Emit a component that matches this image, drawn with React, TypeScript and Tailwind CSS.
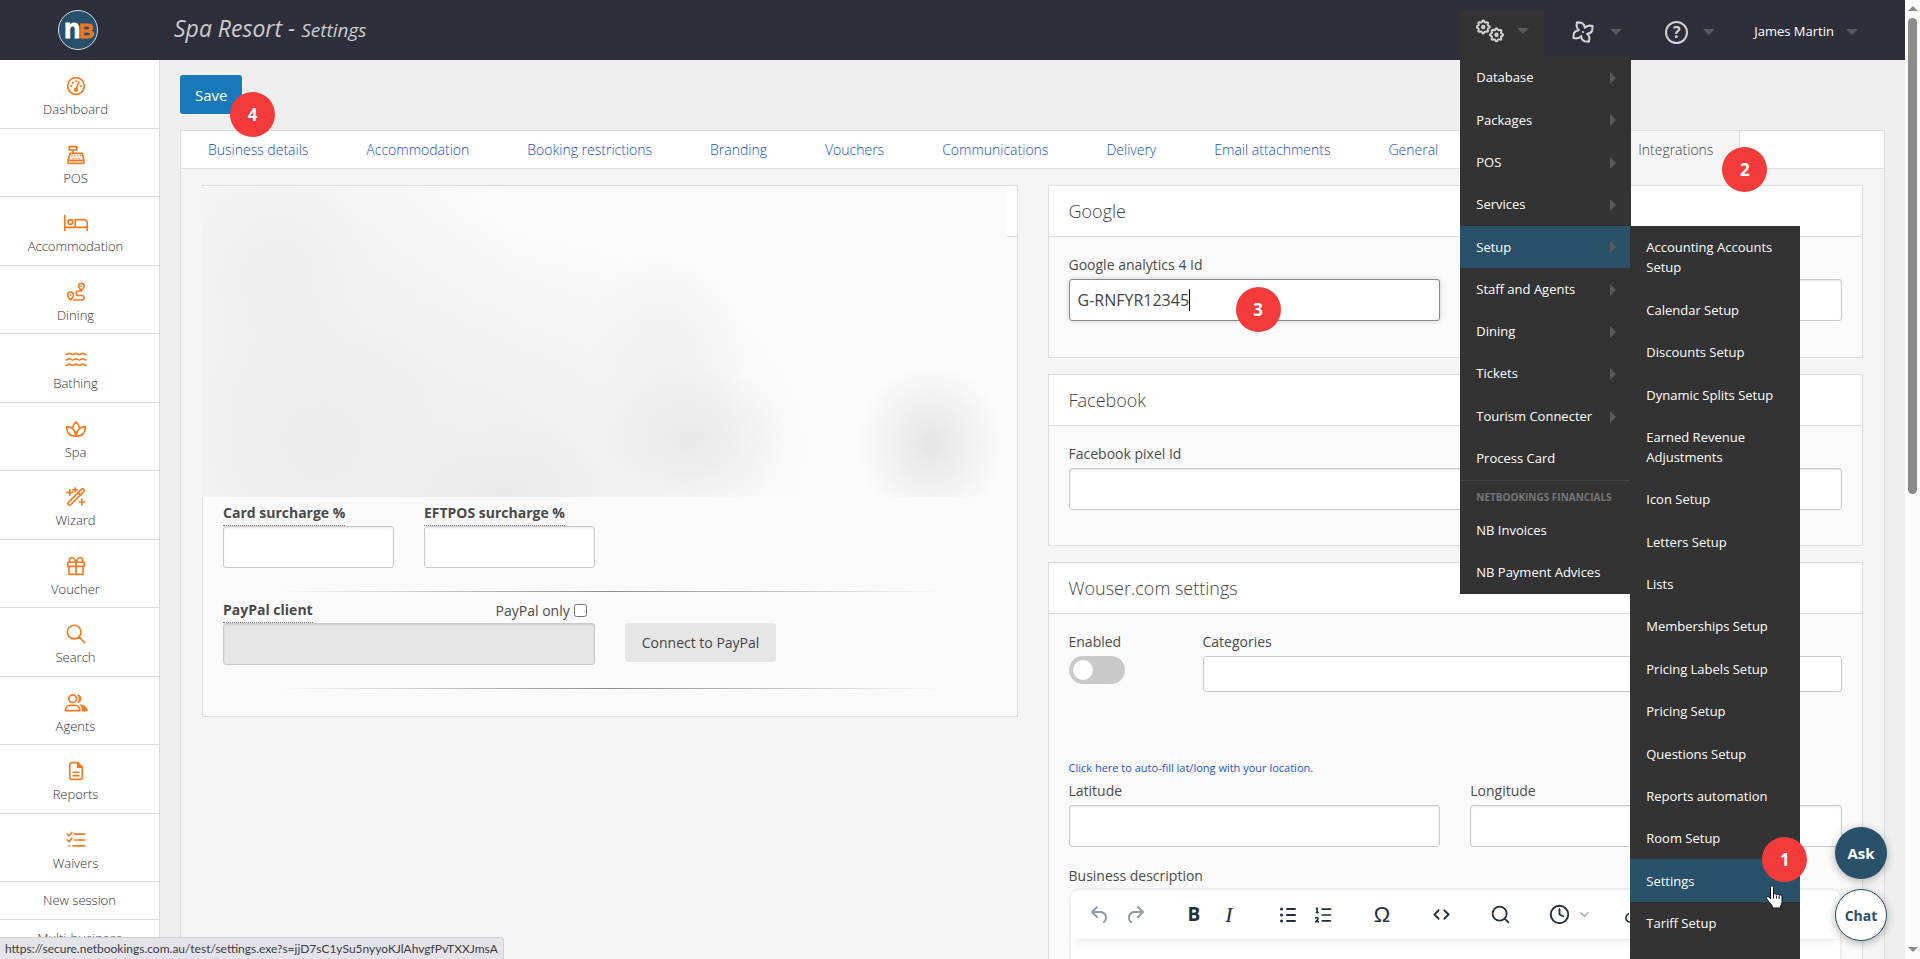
import React from 'react';
import { ChevronDown, Clock, Code, Link2, ListOrdered, Search } from 'lucide-react';
import { clsx } from 'clsx';

const gearPath = (cx: number, cy: number) => {
  const points: string[] = [];
  for (let i = 0; i <= 72; i++) {
    const a = (i / 72) * Math.PI * 2;
    const r = 5.7 + 0.8 * Math.cos(a * 8);
    points.push(`${(cx + r * Math.cos(a)).toFixed(2)},${(cy + r * Math.sin(a)).toFixed(2)}`);
  }
  return `M${points.join('L')}Z`;
};

const GearsIcon = () => (
  <svg width="28" height="24" viewBox="0 0 28 24" fill="none" stroke="#d2d2d2" strokeWidth="2">
    <path d={gearPath(7.2, 8)} />
    <path d={gearPath(20.5, 15.8)} />
    <circle cx="7.2" cy="8" r="1.2" />
    <circle cx="20.5" cy="15.8" r="1.2" />
  </svg>
);

const PinwheelIcon = () => (
  <svg width="22" height="22" viewBox="-12 -12 24 24" fill="none" stroke="#d2d2d2" strokeWidth="2.2" strokeLinejoin="round">
    <path d="M-6.500-10.500L-1.500-10Q2-8 2-4.500Q5-8 10.500-6.500L10-1.500Q8 2 4.500 2Q8 5 6.500 10.500L1.500 10Q-2 8-2 4.500Q-5 8-10.500 6.500L-10 1.500Q-8-2-4.500-2Q-8-5-6.500-10.500Z" />
    <circle r="1.2" fill="#d2d2d2" stroke="none" />
  </svg>
);

const Logo = () => (
  <svg width="42" height="42" viewBox="0 0 42 42" role="img" aria-label="NB" fontFamily="Liberation Sans, sans-serif" fontWeight="700">
    <circle cx="21" cy="21" r="19.5" fill="#27506a" stroke="#d7dde2" strokeWidth="1" />
    <text x="7" y="29" fontSize="27" fill="#fff" stroke="#fff" strokeWidth="0.8">n</text>
    <text x="22" y="29" fontSize="21" fill="#ef7622" stroke="#ef7622" strokeWidth="0.8">B</text>
  </svg>
);

const icons: Record<string, React.ReactNode> = {
  Dashboard: (
    <>
      <circle cx="12" cy="12" r="10" />
      <circle cx="12" cy="16.5" r="1.6" fill="currentColor" />
      <path d="M12.6 15 15.4 7" />
      <path d="M6.4 12h.1M8.2 8h.1M12 6.3h.1M17.6 12h.1" strokeWidth="2.6" />
    </>
  ),
  POS: (
    <>
      <path d="M4 2h9v4H4zM8.500 6v4M5 10h14.500l2 8v4h-19v-4zM2.500 18.500h19" />
      <path d="M7 13h.1M10.500 13h.1M14 13h.1M17.500 13h.1M8.500 16h.1M12 16h.1M15.500 16h.1" strokeWidth="1.8" />
      <path d="M3.500 19.500h17v1.500h-17z" fill="#f9c49c" stroke="none" />
    </>
  ),
  Accommodation: (
    <>
      <path d="M-1.500 3v18M-1.500 17.200h27M25.500 21v-9a4 4 0 0 0-4-4H11v9" />
      <circle cx="5.200" cy="10.800" r="2.800" />
    </>
  ),
  Dining: (
    <>
      <path d="M18.500 10.500s3.300-3.400 3.300-5.600a3.300 3.300 0 0 0-6.600 0c0 2.200 3.300 5.600 3.300 5.600ZM5.500 21.500s3.500-3.600 3.500-6a3.500 3.500 0 0 0-7 0c0 2.400 3.500 6 3.500 6Z" />
      <path d="M18.500 10.800H15a2.700 2.700 0 0 0 0 5.400h4a2.700 2.700 0 0 1 0 5.400H9" />
      <path d="M18.500 5h.1M5.500 15.500h.1" strokeWidth="2" />
    </>
  ),
  Bathing: (
    <path d="M0 5.500c1.500 0 2.500-1.500 4-1.500s2.500 1.500 4 1.500S10.500 4 12 4s2.500 1.500 4 1.500S18.500 4 20 4s2.500 1.500 4 1.500M0 12c1.500 0 2.500-1.500 4-1.500S6.500 12 8 12s2.500-1.500 4-1.500 2.500 1.500 4 1.500 2.500-1.500 4-1.500 2.500 1.500 4 1.500M0 18.500C1.500 18.500 2.500 17 4 17s2.500 1.500 4 1.500 2.500-1.500 4-1.500 2.500 1.500 4 1.500 2.500-1.500 4-1.500 2.500 1.500 4 1.500" />
  ),
  Spa: (
    <path d="M12 20.500C5 20.500.7 16.500.7 9.500 7 9.300 11 12.500 12 20.500Zm0 0c7 0 11.300-4 11.300-11C17 9.300 13 12.500 12 20.500ZM8 10.500C8.700 7.500 10 5 12 3.500c2 1.500 3.300 4 4 7" />
  ),
  Wizard: (
    <>
      <path d="m2.800 18.500 15.700-15.700a1.700 1.700 0 0 1 2.500 0l.3.300a1.700 1.700 0 0 1 0 2.500L5.600 21.300a1.700 1.700 0 0 1-2.500 0l-.3-.3a1.700 1.700 0 0 1 0-2.500ZM14.500 7l3 3" />
      <path d="M4.500 3v7M1 6.500h7M11 1v5M8.500 3.500h5M19 14.500v7M15.500 18h7" />
    </>
  ),
  Voucher: (
    <path d="M2 7.500h20v5H2zM3.500 12.500h17v9.500h-17zM12 7.500V22M12 7.500C10.500 4 9 1.800 7 1.800a2.800 2.800 0 0 0 0 5.700M12 7.500c1.500-3.500 3-5.700 5-5.700a2.800 2.800 0 0 1 0 5.700" />
  ),
  Search: <path d="m15.500 15.500 7 7M18 9.700a8.200 8.200 0 1 1-16.400 0 8.200 8.200 0 0 1 16.400 0Z" />,
  Agents: (
    <>
      <circle cx="8" cy="6.800" r="4.600" />
      <path d="M-.8 21.200c0-4 2.800-6.400 6-6.400h5.600c3.200 0 6 2.400 6 6.400Z" />
      <path d="M14.500 2.200a5 5 0 0 1 0 9.600c1.600-3.200 1.600-6.400 0-9.600ZM17.500 14.500c4.500 0 8 2.700 8 7.200h-6c0-3-.8-5.200-2-7.200Z" fill="currentColor" strokeWidth="1" />
    </>
  ),
  Reports: (
    <>
      <path d="M14 2H7a2.500 2.500 0 0 0-2.500 2.500v15A2.500 2.500 0 0 0 7 22h10a2.500 2.500 0 0 0 2.500-2.500v-12ZM8.500 13.500h7M8.500 17.500h7" />
      <path d="M14 2v5.500h5.500Z" fill="currentColor" />
    </>
  ),
  Waivers: (
    <path d="M10 5h12.500M10 12h12.500M8.500 19h14M1.500 5l2 2L7 3M1.500 12l2 2L7 10M3.800 19h.4" />
  ),
};

const SidebarIcon = ({ name }: { name: string }) => (
  <svg
    className="h-5 w-5 overflow-visible text-[#f47b20]"
    viewBox="0 0 24 24"
    fill="none"
    stroke="currentColor"
    strokeWidth="2"
    strokeLinecap="round"
    strokeLinejoin="round"
  >
    {icons[name]}
  </svg>
);

const tabs = [
  'Business details',
  'Accommodation',
  'Booking restrictions',
  'Branding',
  'Vouchers',
  'Communications',
  'Delivery',
  'Email attachments',
  'General',
];

const menuItems = [
  'Database',
  'Packages',
  'POS',
  'Services',
  'Setup',
  'Staff and Agents',
  'Dining',
  'Tickets',
  'Tourism Connecter',
  'Process Card',
];

const setupItems = [
  'Accounting Accounts Setup',
  'Calendar Setup',
  'Discounts Setup',
  'Dynamic Splits Setup',
  'Earned Revenue Adjustments',
  'Icon Setup',
  'Letters Setup',
  'Lists',
  'Memberships Setup',
  'Pricing Labels Setup',
  'Pricing Setup',
  'Questions Setup',
  'Reports automation',
  'Room Setup',
  'Settings',
  'Tariff Setup',
];

const inputClass =
  'block h-[42px] w-full rounded-[3px] border border-[#cacaca] bg-white px-2 text-base text-[#444] shadow-[inset_0_1px_2px_rgba(10,10,10,0.1)] outline-none';

const Step = ({ n, className }: { n: number; className: string }) => (
  <span
    className={clsx(
      'absolute z-30 flex h-[45px] w-[45px] items-center justify-center rounded-full bg-[#f43b3b] text-[17px] font-bold text-white',
      className,
    )}
  >
    {n}
  </span>
);

const Caret = () => (
  <span className="h-0 w-0 border-x-6 border-t-6 border-x-transparent border-t-[#5b5b5b]" />
);

const Pointer = () => (
  <svg className="absolute top-[26px] left-[135px] z-40" width="20" height="25" viewBox="0 0 20 25">
    <path
      d="M5.500 2.500c0-2 3-2 3 0v7c.3-1.300 2.700-1.200 2.900.3.500-1.100 2.600-.8 2.800.6.700-.9 2.800-.5 2.800 1.200v5c0 2-.8 3-1.300 4.400V23H7.300v-2c-2-2.200-3.300-4.300-5.500-7-1-1.800.8-3.200 2.300-1.800l1.400 1.600Z"
      fill="#fff"
      stroke="#111"
      strokeLinejoin="round"
    />
    <path d="M8.500 9.500v4M11.400 10.500v3M14.200 11v3" stroke="#111" />
  </svg>
);

const Sidebar = () => (
  <nav className="w-40 shrink-0 border-r border-[#ddd] bg-white text-[13px] font-light text-[#333]">
    <ul className="grid h-[822px] auto-rows-fr">
      {Object.keys(icons).map((name) => (
        <li key={name} className="border-b border-[#e2dde2]">
          <a href="#" className="flex flex-col items-center pt-4 pr-2 leading-5">
            <SidebarIcon name={name} />
            <span className="mt-[3px]">{name}</span>
          </a>
        </li>
      ))}
    </ul>
    <a href="#" className="block border-b border-[#e2dde2] text-center leading-[37px]">New session</a>
    <a href="#" className="block text-center leading-[37px]">Multi-business</a>
  </nav>
);

const SetupMenu = () => (
  <div className="absolute top-0 left-full h-[733px] w-[170px] bg-[#333]">
    <ul className="flex h-[718px] flex-col">
      {setupItems.map((item) => (
        <li
          key={item}
          className={clsx('relative flex grow items-center px-4', item === 'Settings' && 'bg-[#29516a]')}
        >
          <a href="#" className="py-[11px] leading-5">{item}</a>
          {item === 'Settings' && (
            <>
              <Step n={1} className="-top-[22px] left-[132px]" />
              <Pointer />
            </>
          )}
        </li>
      ))}
    </ul>
  </div>
);

const AdminMenu = () => (
  <div className="absolute top-full left-0 w-[171px] bg-[#333] py-px text-[13px] text-white">
    <ul className="grid h-[423px] w-[170px] auto-rows-fr">
      {menuItems.map((item) => (
        <li key={item} className={clsx('relative flex items-center pr-[14px] pl-4', item === 'Setup' && 'bg-[#29516a]')}>
          <a href="#" className="grow">{item}</a>
          {item !== 'Process Card' && (
            <span className="h-0 w-0 border-y-6 border-l-6 border-y-transparent border-l-[#5b5b5b]" />
          )}
          {item === 'Setup' && <SetupMenu />}
        </li>
      ))}
    </ul>
    <div className="w-[170px] border-t border-[#444] px-4 pt-[5px] text-[10px] leading-[23px] font-bold whitespace-nowrap text-[#777] uppercase">
      Netbookings Financials
    </div>
    <a href="#" className="block px-4 leading-[42px]">NB Invoices</a>
    <a href="#" className="block px-4 leading-[42px]">NB Payment Advices</a>
  </div>
);

const Header = () => (
  <header className="relative z-20 flex h-[60px] shrink-0 items-center bg-[#2e2f3b] pr-[34px]">
    <div className="flex w-[174px] shrink-0 pl-[57px]">
      <Logo />
    </div>
    <h1 className="grow pb-1 text-[23px] text-[#ccc] italic">
      Spa Resort - <small className="text-[19px]">Settings</small>
    </h1>
    <div className="flex items-center gap-3 text-[13px] font-medium text-white">
      <div className="relative mt-[6px] h-[46px] bg-[#333]">
        <button className="flex h-[46px] w-[84px] items-center justify-between pt-1 pr-[15px] pb-2 pl-4" aria-label="Administration">
          <GearsIcon />
          <Caret />
        </button>
        <AdminMenu />
      </div>
      <button className="flex h-[46px] w-[81px] items-center justify-between pt-1 pr-[15px] pl-4" aria-label="Activity">
        <PinwheelIcon />
        <Caret />
      </button>
      <button className="flex h-[46px] w-[81px] items-center justify-between pt-1 pr-[15px] pl-4" aria-label="Help">
        <span className="flex h-[23px] w-[23px] items-center justify-center rounded-full border-2 border-[#d2d2d2] text-base font-bold text-[#d2d2d2]">
          ?
        </span>
        <Caret />
      </button>
      <button className="flex h-[46px] items-center gap-3 pt-1 pr-[13px] pl-3">
        James Martin
        <Caret />
      </button>
    </div>
  </header>
);

const Panel = ({ title, children }: { title: string; children: React.ReactNode }) => (
  <section className="border border-[#ddd] bg-[#fafafa]">
    <h2 className="border-b border-[#ddd] bg-white px-5 text-lg leading-[50px] font-light text-[#444]">{title}</h2>
    <div className="px-5 pt-4">{children}</div>
  </section>
);

const Label = ({ htmlFor, children }: { htmlFor: string; children: React.ReactNode }) => (
  <label htmlFor={htmlFor} className="block pb-0.5 text-sm leading-6 text-[#4d4d4d]">
    {children}
  </label>
);

const TipLabel = ({ htmlFor, children }: { htmlFor: string; children: React.ReactNode }) => (
  <label
    htmlFor={htmlFor}
    className="inline-block border-b border-dotted border-[#777] text-sm leading-6 font-bold text-[#4a4a4a]"
  >
    {children}
  </label>
);

const Divider = () => (
  <hr className="h-px border-0 bg-[linear-gradient(to_right,transparent_7%,#8c8c8c_50%,transparent_93%)]" />
);

const PaymentPanel = () => (
  <section className="relative self-start border border-[#ddd] bg-[#fafafa]">
    <div className="h-[51px] border-b border-[#ddd] bg-white" />
    <div className="absolute top-px right-[10px] -left-px h-[310px] bg-[#fbfbfb] bg-[radial-gradient(ellipse_90px_110px_at_77px_93px,#eeeeee,transparent),radial-gradient(ellipse_150px_150px_at_120px_255px,#ececec,transparent),radial-gradient(ellipse_130px_80px_at_300px_308px,#e9e9e9,transparent),radial-gradient(ellipse_100px_75px_at_488px_250px,#e8e8e8,transparent),radial-gradient(ellipse_80px_110px_at_465px_170px,#f1f1f1,transparent),radial-gradient(ellipse_75px_80px_at_729px_257px,#e5e5e5,transparent),radial-gradient(ellipse_420px_240px_at_220px_260px,#f1f1f1_30%,transparent),radial-gradient(ellipse_260px_280px_at_60px_110px,#f3f3f3_30%,transparent)]" />
    <div className="mt-[263px] grid grid-cols-4 gap-x-[30px] px-5">
      <div>
        <TipLabel htmlFor="card">Card surcharge %</TipLabel>
        <input id="card" className={inputClass} />
      </div>
      <div>
        <TipLabel htmlFor="eftpos">EFTPOS surcharge %</TipLabel>
        <input id="eftpos" className={inputClass} />
      </div>
    </div>
    <div className="px-5 pt-[23px] pb-1.5">
      <Divider />
    </div>
    <div className="grid grid-cols-4 gap-x-[30px] px-5">
      <div className="col-span-2">
        <div className="flex justify-between">
          <TipLabel htmlFor="paypal">PayPal client</TipLabel>
          <label className="flex items-center gap-1 pr-2 text-sm text-[#4d4d4d]">
            PayPal only
            <input type="checkbox" className="h-[13px] w-[13px]" />
          </label>
        </div>
        <input
          id="paypal"
          disabled
          className="block h-[42px] w-full rounded-[3px] border border-[#cacaca] bg-[#e6e6e6] px-2 shadow-[inset_0_1px_2px_rgba(10,10,10,0.1)]"
        />
      </div>
      <div className="pt-[25px]">
        <button className="h-[39px] rounded-[3px] bg-[#e6e6e6] px-[17px] text-sm whitespace-nowrap text-[#444]">
          Connect to PayPal
        </button>
      </div>
    </div>
    <div className="px-5 pt-[23px] pb-[27px]">
      <Divider />
    </div>
  </section>
);

const UndoIcon = ({ flip }: { flip?: boolean }) => (
  <svg width="24" height="24" viewBox="0 0 24 24" fill="#929aa3" className={clsx(flip && '-scale-x-100')}>
    <path d="M6.400 8H12c3.700 0 6.200 2 6.800 5.100.6 2.700-.4 5.600-2.300 6.800a1 1 0 0 1-1-1.800c1.100-.6 1.800-2.700 1.400-4.600-.5-2.100-2.100-3.500-4.900-3.500H6.400l3.300 3.300a1 1 0 1 1-1.400 1.400l-5-5a1 1 0 0 1 0-1.400l5-5a1 1 0 0 1 1.400 1.400L6.400 8Z" />
  </svg>
);

const toolClass = 'flex h-7 w-[35px] shrink-0 items-center justify-center';

const Editor = () => (
  <div className="h-[200px] overflow-hidden rounded-[10px] border-2 border-[#eee] bg-white">
    <div className="flex h-[49px] items-center pl-3 text-[#222f3e] shadow-[0_2px_2px_-2px_rgba(34,47,62,0.1),0_8px_8px_-4px_rgba(34,47,62,0.07)]">
      <button className={toolClass} aria-label="Undo"><UndoIcon /></button>
      <button className={toolClass} aria-label="Redo"><UndoIcon flip /></button>
      <button className={clsx(toolClass, 'ml-6 text-[19px] font-bold')}>B</button>
      <button className={clsx(toolClass, "font-['Liberation_Serif',serif] text-[22px] italic")}>I</button>
      <button className={clsx(toolClass, 'ml-6')} aria-label="Bullet list">
        <svg width="24" height="24" viewBox="0 0 24 24" stroke="currentColor" strokeWidth="2" strokeLinecap="round">
          <path d="M11 6h8M11 12h8M11 18h8" />
          <path d="M5.500 6h.1M5.500 12h.1M5.500 18h.1" strokeWidth="3" />
        </svg>
      </button>
      <button className={toolClass} aria-label="Numbered list"><ListOrdered size={20} /></button>
      <button className={clsx(toolClass, "ml-6 font-['Liberation_Sans',sans-serif] text-[22px]")}>Ω</button>
      <button className={clsx(toolClass, 'ml-6')} aria-label="Source code"><Code size={17} strokeWidth={2.5} /></button>
      <button className={clsx(toolClass, 'ml-6')} aria-label="Find"><Search size={21} /></button>
      <button className={clsx(toolClass, 'ml-6')} aria-label="Insert date"><Clock size={21} strokeWidth={2.2} /></button>
      <ChevronDown size={15} color="#929aa3" />
      <button className={clsx(toolClass, 'ml-6')} aria-label="Link"><Link2 size={20} className="-rotate-45" /></button>
    </div>
  </div>
);

const App: React.FC = () => {
  return (
    <div className="relative flex h-screen overflow-hidden bg-[#efefef] font-['Open_Sans',sans-serif]">
      <div className="flex min-w-0 flex-1 flex-col">
        <Header />
        <div className="flex min-h-0 flex-1">
          <Sidebar />
          <main className="min-w-0 flex-1 pt-[15px] pr-5 pl-5">
            <div className="relative inline-block">
              <button className="block h-[39px] rounded-[3px] bg-[#1779ba] px-[15px] pt-0.5 text-[15px] font-medium text-white">
                Save
              </button>
              <Step n={4} className="top-[17px] left-[50px]" />
            </div>

            <div className="mt-4 border border-[#ddd] bg-[#f5f5f5]">
              <div className="flex h-[38px] border-b border-[#ddd] bg-white text-sm leading-[37px] font-light whitespace-nowrap">
                {tabs.map((tab) => (
                  <a key={tab} href="#" className="pr-[31px] pl-[27px] text-[#0f4fcb]">{tab}</a>
                ))}
                <span className="w-[143px]" />
                <a href="#" className="relative -mb-px border-r border-[#ddd] bg-[#f5f5f5] px-[26px] text-[#444]">
                  Integrations
                  <Step n={2} className="top-4 right-[-28px]" />
                </a>
              </div>

              <div className="grid grid-cols-2 gap-[30px] px-[21px] pt-4">
                <PaymentPanel />
                <div className="space-y-4">
                  <Panel title="Google">
                    <div className="grid grid-cols-2 gap-[30px] pb-9">
                      <div>
                        <Label htmlFor="ga">Google analytics 4 Id</Label>
                        <div className="relative">
                          <input
                            id="ga"
                            defaultValue="G-RNFYR12345"
                            className="block h-[42px] w-full rounded-[3px] border border-[#8a8a8a] bg-white px-2 text-base text-[#444] shadow-[0_0_5px_#cacaca] outline-none"
                          />
                          <span className="absolute top-[10px] left-[120px] h-[22px] w-px bg-black" />
                          <Step n={3} className="top-2 left-[167px]" />
                        </div>
                      </div>
                      <div className="pt-[26px]">
                        <input aria-label="Google tag" className={inputClass} />
                      </div>
                    </div>
                  </Panel>

                  <Panel title="Facebook">
                    <div className="pb-[35px]">
                      <Label htmlFor="fb">Facebook pixel Id</Label>
                      <input id="fb" className={inputClass} />
                    </div>
                  </Panel>

                  <Panel title="Wouser.com settings">
                    <div className="flex">
                      <div className="w-[134px] shrink-0">
                        <Label htmlFor="enabled">Enabled</Label>
                        <input
                          id="enabled"
                          type="checkbox"
                          role="switch"
                          className="block h-7 w-14 appearance-none rounded-full bg-[#cacaca] before:mt-1 before:ml-1 before:block before:h-5 before:w-5 before:rounded-full before:bg-white"
                        />
                      </div>
                      <div className="grow">
                        <Label htmlFor="categories">Categories</Label>
                        <input id="categories" className="block h-9 w-full rounded-[3px] border border-[#cacaca] bg-white px-2 outline-none" />
                      </div>
                    </div>
                    <a href="#" className="mt-[65px] block text-[11px] leading-[22px] text-[#1a56cc]">
                      Click here to auto-fill lat/long with your location.
                    </a>
                    <div className="grid grid-cols-2 gap-[30px] pb-4">
                      <div>
                        <Label htmlFor="lat">Latitude</Label>
                        <input id="lat" className={inputClass} />
                      </div>
                      <div>
                        <Label htmlFor="long">Longitude</Label>
                        <input id="long" className={inputClass} />
                      </div>
                    </div>
                    <p className="text-sm leading-[25px] text-[#4d4d4d]">Business description</p>
                    <Editor />
                  </Panel>
                </div>
              </div>
            </div>
          </main>
        </div>
      </div>

      <div className="flex w-[15px] shrink-0 flex-col items-center bg-[#fcfcfc]">
        <span className="mt-1.5 border-x-5 border-b-5 border-x-transparent border-b-[#8b8b8b]" />
        <span className="mt-[7px] h-[476px] w-[9px] rounded-full bg-[#8b8b8b]" />
        <span className="mt-auto mb-[7px] border-x-5 border-t-5 border-x-transparent border-t-[#8b8b8b]" />
      </div>

      <div className="absolute right-[33px] bottom-[18px] z-30 flex flex-col gap-[10px] text-[15px] font-bold">
        <button className="h-[52px] w-[52px] rounded-full bg-[#29516a] text-white shadow-[0_2px_8px_rgba(0,0,0,0.3)]">Ask</button>
        <button className="h-[52px] w-[52px] rounded-full border border-[#29516a] bg-white text-[14px] text-[#29516a] shadow-[0_2px_8px_rgba(0,0,0,0.3)]">
          Chat
        </button>
      </div>

      <div className="absolute bottom-0 left-0 z-30 rounded-tr-[4px] border-t border-r border-[#cfcfd6] bg-[#e4e3e9] pr-[5px] pl-[5px] font-['Lato','Open_Sans',sans-serif] text-xs leading-[21px] text-[#3c3c43]">
        https://secure.netbookings.com.au/test/settings.exe?s=jjD7sC1ySu5nyyoKJlAhvgfPvTXXJmsA
      </div>
    </div>
  );
};

export default App;
